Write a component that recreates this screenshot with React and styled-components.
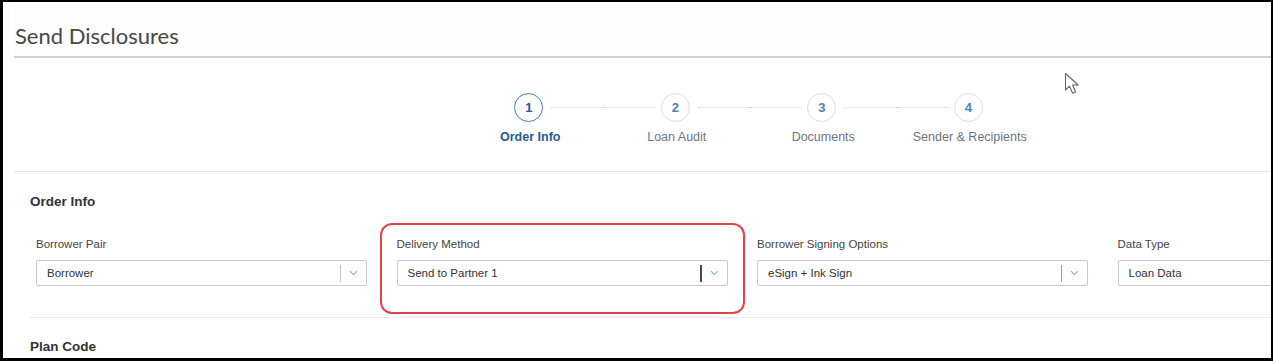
import React from 'react';
import styled, { createGlobalStyle } from 'styled-components';

const GlobalStyle = createGlobalStyle`
  html, body { margin: 0; padding: 0; background: #000; }
  body { font-family: 'Liberation Sans', Arial, sans-serif; }
`;

const steps = [
    { n: 1, label: 'Order Info' },
    { n: 2, label: 'Loan Audit' },
    { n: 3, label: 'Documents' },
    { n: 4, label: 'Sender & Recipients' },
];

const fields = [
    { label: 'Borrower Pair', value: 'Borrower' },
    { label: 'Delivery Method', value: 'Send to Partner 1', highlight: true, dark: true },
    { label: 'Borrower Signing Options', value: 'eSign + Ink Sign', mid: true },
    { label: 'Data Type', value: 'Loan Data' },
];

const Chevron = () => (
    <svg width="9" height="6" viewBox="0 0 9 6">
        <path d="M1 1.2 L4.5 4.6 L8 1.2" fill="none" stroke="#8fabc8" strokeWidth="1.1" />
    </svg>
);

const Cursor = () => (
    <svg width="18" height="23" viewBox="0 0 18 23">
        <path d="M1.5 1.5 L1.5 18 L5.5 14.2 L8.6 21.2 L11.6 19.9 L8.6 13 L14.2 13 Z"
            fill="#fff" stroke="#666" strokeWidth="1.1" strokeLinejoin="round" />
    </svg>
);

const App = () => {
    return (
        <Frame>
            <GlobalStyle />
            <Panel>
                <Header>
                    <Title>Send Disclosures</Title>
                </Header>
                <Stepper>
                    {steps.map((s, i) => (
                        <Step key={s.n}>
                            <CircleRow>
                                <Dots $side="left" $off={i === 0} />
                                <Circle $active={i === 0}>{s.n}</Circle>
                                <Dots $side="right" $off={i === steps.length - 1} />
                            </CircleRow>
                            <StepLabel $active={i === 0}>{s.label}</StepLabel>
                        </Step>
                    ))}
                </Stepper>
                <Section>
                    <SectionTitle>Order Info</SectionTitle>
                    <FieldRow>
                        {fields.map((f) => (
                            <Field key={f.label} $highlight={f.highlight}>
                                <FieldLabel>{f.label}</FieldLabel>
                                <Select>
                                    <SelectValue>{f.value}</SelectValue>
                                    <Separator $tone={f.dark ? 'dark' : f.mid ? 'mid' : 'light'} />
                                    <Arrow><Chevron /></Arrow>
                                </Select>
                            </Field>
                        ))}
                    </FieldRow>
                </Section>
                <SubSection>
                    <SectionTitle>Plan Code</SectionTitle>
                </SubSection>
                <CursorSpot><Cursor /></CursorSpot>
            </Panel>
        </Frame>
    );
};

export default App;

const Frame = styled.div`
    width: 1273px;
    height: 361px;
    box-sizing: border-box;
    padding: 2px 2px 3px 3px;
    background: #000;
    overflow: hidden;
`;

const Panel = styled.div`
    position: relative;
    height: 100%;
    background: #fff;
    overflow: hidden;
`;

const Header = styled.div`
    margin-left: 11px;
    padding: 22px 0 8px 1px;
    background: #fdfdfd;
    border-bottom: 2px solid #d2d2d2;
`;

const Title = styled.div`
    font-family: Lato, 'Open Sans', sans-serif;
    font-size: 22px;
    line-height: 24px;
    color: #474747;
`;

const Stepper = styled.div`
    display: flex;
    margin-left: 11px;
    padding: 35px 0 26px 443px;
    border-bottom: 1px solid #e6e6e6;
`;

const Step = styled.div`
    width: 146.5px;
    flex: none;
    display: flex;
    flex-direction: column;
    align-items: center;
`;

const CircleRow = styled.div`
    width: 100%;
    display: flex;
    align-items: center;
`;

const Dots = styled.div`
    flex: 1;
    height: 0;
    border-top: 1px dotted ${(p) => (p.$off ? 'transparent' : '#d2d2d2')};
    margin: ${(p) => (p.$side === 'left' ? '0 5px 0 0' : '0 0 0 8px')};
`;

const Circle = styled.div`
    width: 29px;
    height: 29px;
    flex: none;
    box-sizing: border-box;
    border-radius: 50%;
    border: ${(p) => (p.$active ? '1.6px solid #3d80ba' : '1.5px solid #dedede')};
    display: flex;
    align-items: center;
    justify-content: center;
    font-size: 13px;
    font-weight: bold;
    color: ${(p) => (p.$active ? '#1f5c91' : '#4d82c0')};
`;

const StepLabel = styled.div`
    margin-top: 7px;
    font-size: 12.5px;
    line-height: 16px;
    white-space: nowrap;
    font-weight: ${(p) => (p.$active ? 'bold' : 'normal')};
    color: ${(p) => (p.$active ? '#2a5d8d' : '#6c7581')};
`;

const Section = styled.div`
    margin-left: 27px;
    padding-top: 21px;
    padding-bottom: 31px;
    border-bottom: 1px solid #e9e9e9;
`;

const SubSection = styled.div`
    margin-left: 27px;
    padding-top: 20px;
`;

const SectionTitle = styled.div`
    font-size: 13.5px;
    line-height: 18px;
    font-weight: bold;
    color: #333;
`;

const FieldRow = styled.div`
    display: grid;
    grid-template-columns: repeat(4, 331px);
    column-gap: 29.5px;
    margin-top: 25px;
    padding-left: 6px;
`;

const Field = styled.div`
    position: relative;
    ${(p) => p.$highlight && `
        &::before {
            content: '';
            position: absolute;
            left: -16.5px;
            right: -17.5px;
            top: -13px;
            bottom: -28px;
            border: 2px solid #e6424c;
            border-radius: 12px;
        }
    `}
`;

const FieldLabel = styled.div`
    font-size: 11.5px;
    line-height: 16px;
    color: #444;
`;

const Select = styled.div`
    margin-top: 8px;
    height: 26px;
    box-sizing: border-box;
    border: 1px solid #c9c9c9;
    border-radius: 2px;
    display: flex;
    align-items: center;
    background: #fff;
`;

const SelectValue = styled.div`
    flex: 1;
    padding-left: 10px;
    font-size: 11.5px;
    color: #333;
`;

const Separator = styled.div`
    width: ${(p) => (p.$tone === 'dark' ? '2px' : '1px')};
    height: 17px;
    background: ${(p) => (p.$tone === 'dark' ? '#4a4a4a' : p.$tone === 'mid' ? '#9a9a9a' : '#c4c4c4')};
`;

const Arrow = styled.div`
    width: 25px;
    display: flex;
    justify-content: center;
    align-items: center;
`;

const CursorSpot = styled.div`
    position: absolute;
    left: 1061px;
    top: 70px;
    line-height: 0;
`;
